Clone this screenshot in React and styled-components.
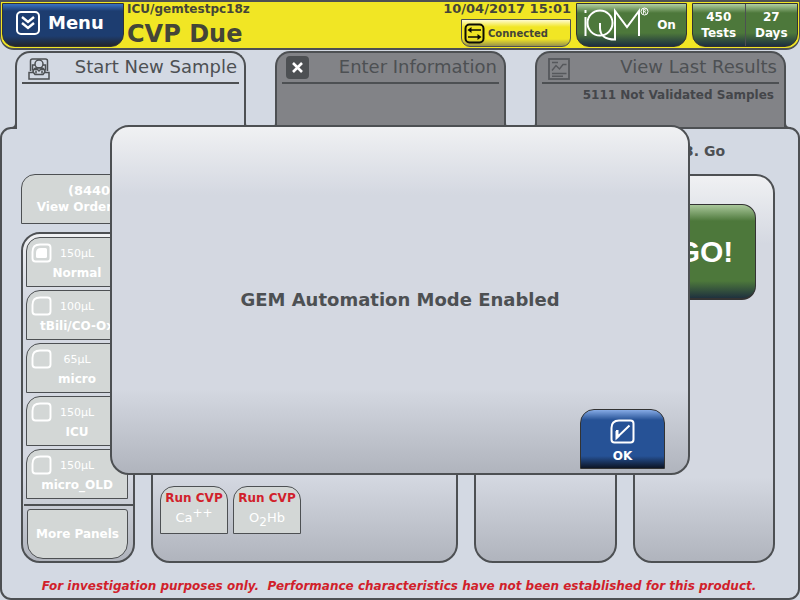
import React from "react";
import styled, { createGlobalStyle } from "styled-components";

const INK = "#4d5053";
const SANS = '"DejaVu Sans", Verdana, sans-serif';

const GlobalStyle = createGlobalStyle`
  *, *::before, *::after { box-sizing: border-box; }
  body { margin: 0; background: #d3d9e3; font-family: ${SANS}; color: ${INK}; }
  button { font: inherit; color: inherit; margin: 0; padding: 0; cursor: pointer; }
  h1, h2, p { margin: 0; }
  svg { display: block; flex: none; }
`;

const Screen = styled.div`
  position: relative;
  display: flex;
  flex-direction: column;
  min-height: 100vh;
`;

const Header = styled.header`
  display: flex;
  gap: 5px;
  height: 50px;
  padding: 1px 1px 0;
  border: 2px solid ${INK};
  border-width: 2px 1px;
  border-radius: 0 0 14px 14px;
  background: #f1e624;
`;

const MenuButton = styled.button`
  display: flex;
  align-items: center;
  gap: 8px;
  width: 122px;
  height: 44px;
  padding: 0 0 5px 13px;
  border: 1px solid #333;
  border-radius: 0 0 13px 13px;
  background: linear-gradient(#3a72c4 0, #1d3d70 7px, #1d3d70 32px, #23252c 42px);
  color: #fff;
  font-size: 18px;
  line-height: 24px;
  font-weight: bold;
`;

const Status = styled.div`
  flex: 1;
  margin-left: -2px;
  white-space: nowrap;
  color: #444538;
`;

const Location = styled.p`
  font-size: 12px;
  line-height: 12px;
  font-weight: bold;
`;

const Alert = styled.h1`
  font-size: 24px;
  line-height: 38px;
  font-weight: bold;
`;

const Link = styled.div`
  display: flex;
  flex-direction: column;
  align-items: flex-end;
  gap: 4px;
  color: #444538;
`;

const Clock = styled.time`
  font-size: 13px;
  line-height: 12px;
  font-weight: bold;
`;

const Connected = styled.button`
  display: flex;
  align-items: center;
  gap: 3px;
  width: 110px;
  height: 28px;
  padding: 0 2px;
  border: 1px solid ${INK};
  border-radius: 0 0 9px 9px;
  background: linear-gradient(#fffbd0 0, #f1e624 7px, #f1e624 19px, #8b8650 27px);
  font-size: 10px;
  font-weight: bold;
`;

const GreenGroup = styled.div`
  display: flex;
  height: 44px;
  width: ${(p) => p.$width};
  border: 1px solid #333;
  border-radius: 0 0 13px 13px;
  background: linear-gradient(#b2cfa2 0, #4d783b 9px, #4d783b 29px, #1d2f40 42px);
  overflow: hidden;
`;

const GreenButton = styled.button`
  flex: 1;
  display: flex;
  align-items: center;
  justify-content: center;
  gap: 8px;
  padding-right: ${(p) => (p.$logo ? "4px" : "0")};
  border: 0;
  border-left: ${(p) => (p.$divided ? `1px solid ${INK}` : "0")};
  background: transparent;
  color: #fff;
  font-size: 12px;
  line-height: 16px;
  font-weight: bold;
`;

const Tabs = styled.nav`
  display: flex;
  justify-content: space-between;
  height: 77px;
  padding: 1px 14px 0 15px;
`;

const Tab = styled.button`
  position: relative;
  z-index: 1;
  display: flex;
  flex-direction: column;
  align-items: stretch;
  width: ${(p) => p.$width};
  height: ${(p) => (p.$active ? "78px" : "76px")};
  padding: 0 5px;
  border: 2px solid ${INK};
  border-bottom: 0;
  border-radius: 15px 15px 0 0;
  background: ${(p) => (p.$active ? "#d3d9e3" : "#828387")};
  text-align: right;

  &::before, &::after {
    content: "";
    position: absolute;
    bottom: ${(p) => (p.$active ? "0" : "-2px")};
    width: 7px;
    height: 9px;
    border-bottom: 2px solid ${INK};
    background: #d3d9e3;
  }
  &::before {
    left: -7px;
    border-right: 2px solid ${INK};
    border-radius: 0 0 6px 0;
  }
  &::after {
    right: -7px;
    border-left: 2px solid ${INK};
    border-radius: 0 0 0 6px;
  }
`;

const TabTitle = styled.span`
  display: flex;
  align-items: center;
  justify-content: space-between;
  height: 31px;
  padding: 0 2px 0 4px;
  border-bottom: 2px solid ${INK};
  font-size: 18px;
  line-height: 26px;
  white-space: nowrap;
`;

const TabLabel = styled.span`
  padding-bottom: 2px;
`;

const TabNote = styled.span`
  padding: 3px 5px 0;
  color: #44464a;
  font-size: 12px;
  line-height: 16px;
  font-weight: bold;
`;

const Page = styled.main`
  flex: 1;
  display: flex;
  flex-direction: column;
  padding: 0 23px 0 19px;
  border: 2px solid ${INK};
  border-radius: 11px;
`;

const Grid = styled.div`
  display: grid;
  grid-template-columns: 114px 1fr 143px 142px;
  gap: 16px;
`;

const Steps = styled(Grid)`
  height: 45px;
  padding-top: 13px;
`;

const StepLabel = styled.h2`
  grid-column: 4;
  padding-left: 51px;
  font-size: 14px;
  line-height: 18px;
`;

const Columns = styled(Grid)`
  flex: 1;
`;

const Stack = styled.div`
  display: flex;
  flex-direction: column;
  gap: 8px;
`;

const Tile = styled.button`
  border: 1px solid ${INK};
  background: #d3d7d6;
  color: #fff;
  font-weight: bold;
  font-size: 12px;
  line-height: 16px;
`;

const Orders = styled(Tile)`
  height: 50px;
  border-radius: 14px 0 0 0;
  white-space: nowrap;
`;

const OrderCount = styled.span`
  display: block;
  padding-left: 28px;
  font-size: 13px;
`;

const Well = styled.section`
  flex: 1;
  padding: ${(p) => p.$padding || "0"};
  border: 2px solid ${INK};
  border-radius: 19px;
  background: linear-gradient(#f0f1f3 0, #d4d8e1 68px, #d4d8e1 calc(100% - 84px), #b0b4bd 100%);
`;

const PanelWell = styled(Well)`
  display: flex;
  flex-direction: column;
  gap: 3px;
  padding: 3px 5px 2px 3px;
`;

const PanelTile = styled(Tile)`
  display: grid;
  grid-template-columns: 29px 1fr 29px;
  grid-template-rows: 26px 18px;
  align-content: start;
  align-items: center;
  height: 50px;
  border-radius: 14px 0 0 0;
  white-space: nowrap;
`;

const IconCell = styled.span`
  display: flex;
  padding: 4px 0 0 4px;
`;

const Volume = styled.span`
  padding-top: 6px;
  font-weight: normal;
  font-size: 11px;
`;

const PanelName = styled.span`
  grid-column: 1 / -1;
`;

const Rule = styled.hr`
  width: 109px;
  margin: 2px 0 0 -2px;
  border: 0;
  border-top: 2px solid ${INK};
`;

const MorePanels = styled(Tile)`
  height: 50px;
  margin-left: 1px;
  border-radius: 3px 3px 16px 16px;
`;

const Analytes = styled.div`
  display: flex;
  align-items: flex-end;
  gap: 5px;
  height: 100%;
`;

const Analyte = styled(Tile)`
  width: 68px;
  height: 48px;
  border-radius: 14px 14px 0 0;
  white-space: nowrap;
`;

const Overdue = styled.span`
  display: block;
  color: #d11f2b;
`;

const Symbol = styled.span`
  display: block;
  line-height: 24px;
  font-weight: normal;
  font-size: 13px;
  sub, sup { font-size: 12px; line-height: 0; }
`;

const GoButton = styled.button`
  display: block;
  width: 100%;
  height: 96px;
  padding-left: 2px;
  border: 1px solid #333;
  border-bottom-width: 2px;
  border-radius: 14px;
  background: linear-gradient(#a9c79a 0, #4d783b 16px, #4d783b 76px, #1c2d3e 94px);
  color: #fff;
  font-family: "Liberation Sans", Arial, sans-serif;
  font-size: 30px;
  font-weight: bold;
`;

const Disclaimer = styled.p`
  padding: 14px 0 3px 2px;
  color: #d11f2b;
  font-size: 12px;
  line-height: 18px;
  font-weight: bold;
  font-style: italic;
  text-align: center;
  white-space: pre-wrap;
`;

const Dialog = styled.div`
  position: absolute;
  z-index: 2;
  inset: 125px 110px;
  display: flex;
  flex-direction: column;
  padding: 0 23px 4px;
  border: 2px solid ${INK};
  border-radius: 19px;
  background: linear-gradient(#f0f1f3 0, #d4d8e1 68px, #d4d8e1 calc(100% - 84px), #b0b4bd 100%);
`;

const Message = styled.p`
  flex: 1;
  display: flex;
  align-items: center;
  justify-content: center;
  padding-top: 64px;
  font-size: 18px;
  line-height: 24px;
  font-weight: bold;
  white-space: nowrap;
`;

const OkButton = styled.button`
  align-self: flex-end;
  display: flex;
  flex-direction: column;
  align-items: center;
  gap: 4px;
  width: 85px;
  height: 60px;
  padding-top: 9px;
  border: 1px solid #333;
  border-radius: 14px 14px 0 0;
  background: linear-gradient(#86abe6 0, #265296 10px, #265296 46px, #0d1526 58px);
  color: #fff;
  font-size: 12px;
  line-height: 16px;
  font-weight: bold;
`;

const MenuIcon = () => (
  <svg width="24" height="24" viewBox="0 0 24 24" fill="none" stroke="#fff" strokeWidth="2">
    <rect x="1" y="1" width="22" height="22" rx="4" />
    <path d="M6 6l6 5 6-5M6 12l6 5 6-5" strokeWidth="2.400" />
  </svg>
);

const LinkIcon = () => (
  <svg width="21" height="21" viewBox="0 0 21 21" fill="none" stroke="#0c0c04" strokeWidth="2">
    <rect x="1.500" y="1.500" width="18" height="18" rx="4" />
    <path d="M5 7h12M4 14h12" strokeWidth="1.600" />
    <path d="M3.500 7l4-3v6zM17.500 14l-4-3v6z" fill="#0c0c04" stroke="none" />
  </svg>
);

const IqmLogo = () => (
  <svg width="66" height="36" viewBox="0 0 66 36" fill="none" stroke="#fff" strokeWidth="2" role="img" aria-label="iQM">
    <path d="M2.500 10v19M2.500 3v3" />
    <ellipse cx="17" cy="16" rx="12.500" ry="12.500" />
    <path d="M17 16v5c0 7 5 11.500 15 11.500V4l12 16L56 4v25" />
    <circle cx="61.500" cy="4.500" r="3.500" strokeWidth="1" />
    <path d="M60.500 6.800v-4.500h1.300q1.200 1.200 0 2.400h-1.300m1.300 0l1.200 2.100" strokeWidth="0.900" />
  </svg>
);

const PatientIcon = () => (
  <svg width="22" height="22" viewBox="0 0 22 22" fill="none" stroke={INK} strokeWidth="1.500">
    <path d="M2.500 13V3q0-2 2-2h13q2 0 2 2v10" />
    <path d="M1 14.500h4.500l1.500 2h8l1.500-2H21V21H1z" />
    <circle cx="11" cy="6" r="4" />
    <path d="M7 7H4.500v5.500M15 7h2.500v5.500" />
    <path d="M5 14q0-3 3.500-4.200h5Q17 11 17 14M8 10l3 3 3-3M8 12.500v3M14 12.500v3" />
  </svg>
);

const CloseIcon = () => (
  <svg width="23" height="23" viewBox="0 0 23 23">
    <rect width="23" height="23" rx="4" fill={INK} />
    <path d="M7 7l9 9M16 7l-9 9" stroke="#fff" strokeWidth="2.600" />
  </svg>
);

const ResultsIcon = () => (
  <svg width="22" height="22" viewBox="0 0 22 22" fill="none" stroke="#56585c" strokeWidth="1.800">
    <rect x="1" y="1" width="20" height="20" />
    <path d="M4 4.500h6M4 12.500l4-5 3.500 3.500L15 6.500h3.500M4 15.500h14.500M4 18.200h11" strokeWidth="1.400" />
  </svg>
);

const TabIcon = styled.span`
  padding: 2px 0 0 2px;
`;

const PanelIcon = ({ selected }) => (
  <svg width="21" height="20" viewBox="0 0 21 20" fill="none" stroke="#fff" strokeWidth="1.900">
    <path d="M9 1.500h7.500q3 0 3 3v11q0 3-3 3h-12q-3 0-3-3V9q0-7.500 7.500-7.500z" />
    {selected && <path d="M10 5h4.500q1.500 0 1.500 1.500v7q0 1.500-1.500 1.500h-8Q5 15 5 13.500V10q0-5 5-5z" fill="#fff" stroke="none" />}
  </svg>
);

const CheckIcon = () => (
  <svg width="25" height="25" viewBox="0 0 25 25" fill="none" stroke="#fff" strokeWidth="2">
    <path d="M9 1.500h11.500q3 0 3 3v16q0 3-3 3h-16q-3 0-3-3V9q0-7.500 7.500-7.500z" />
    <path d="M6 12h1.500v6L19.500 6.500" />
    <path d="M6.500 12v7l3-3" />
  </svg>
);

const panels = [
  ["150µL", "Normal"],
  ["100µL", "tBili/CO-Ox"],
  ["65µL", "micro"],
  ["150µL", "ICU"],
  ["150µL", "micro_OLD"],
];

export default function App() {
  return (
    <>
      <GlobalStyle />
      <Screen>
        <Header>
          <MenuButton><MenuIcon />Menu</MenuButton>
          <Status>
            <Location>ICU/gemtestpc18z</Location>
            <Alert>CVP Due</Alert>
          </Status>
          <Link>
            <Clock>10/04/2017 15:01</Clock>
            <Connected><LinkIcon />Connected</Connected>
          </Link>
          <GreenGroup $width="111px">
            <GreenButton $logo><IqmLogo />On</GreenButton>
          </GreenGroup>
          <GreenGroup $width="106px">
            <GreenButton>450<br />Tests</GreenButton>
            <GreenButton $divided>27<br />Days</GreenButton>
          </GreenGroup>
        </Header>
        <Tabs>
          <Tab $active $width="231px">
            <TabTitle><TabIcon><PatientIcon /></TabIcon><TabLabel>Start New Sample</TabLabel></TabTitle>
          </Tab>
          <Tab $width="231px">
            <TabTitle><CloseIcon /><TabLabel>Enter Information</TabLabel></TabTitle>
          </Tab>
          <Tab $width="251px">
            <TabTitle><TabIcon><ResultsIcon /></TabIcon><TabLabel>View Last Results</TabLabel></TabTitle>
            <TabNote>5111 Not Validated Samples</TabNote>
          </Tab>
        </Tabs>
        <Page>
          <Steps><StepLabel>3. Go</StepLabel></Steps>
          <Columns>
            <Stack>
              <Orders><OrderCount>(8440)</OrderCount>View Orders</Orders>
              <PanelWell>
                {panels.map(([volume, name], i) => (
                  <PanelTile key={name}>
                    <IconCell><PanelIcon selected={i === 0} /></IconCell>
                    <Volume>{volume}</Volume>
                    <PanelName>{name}</PanelName>
                  </PanelTile>
                ))}
                <Rule />
                <MorePanels>More Panels</MorePanels>
              </PanelWell>
            </Stack>
            <Well $padding="0 7px 27px">
              <Analytes>
                <Analyte><Overdue>Run CVP</Overdue><Symbol>Ca<sup>++</sup></Symbol></Analyte>
                <Analyte><Overdue>Run CVP</Overdue><Symbol>O<sub>2</sub>Hb</Symbol></Analyte>
              </Analytes>
            </Well>
            <Well />
            <Well $padding="28px 17px"><GoButton>GO!</GoButton></Well>
          </Columns>
          <Disclaimer>For investigation purposes only.  Performance characteristics have not been established for this product.</Disclaimer>
        </Page>
        <Dialog role="dialog" aria-modal="true" aria-labelledby="message">
          <Message id="message">GEM Automation Mode Enabled</Message>
          <OkButton><CheckIcon />OK</OkButton>
        </Dialog>
      </Screen>
    </>
  );
}
